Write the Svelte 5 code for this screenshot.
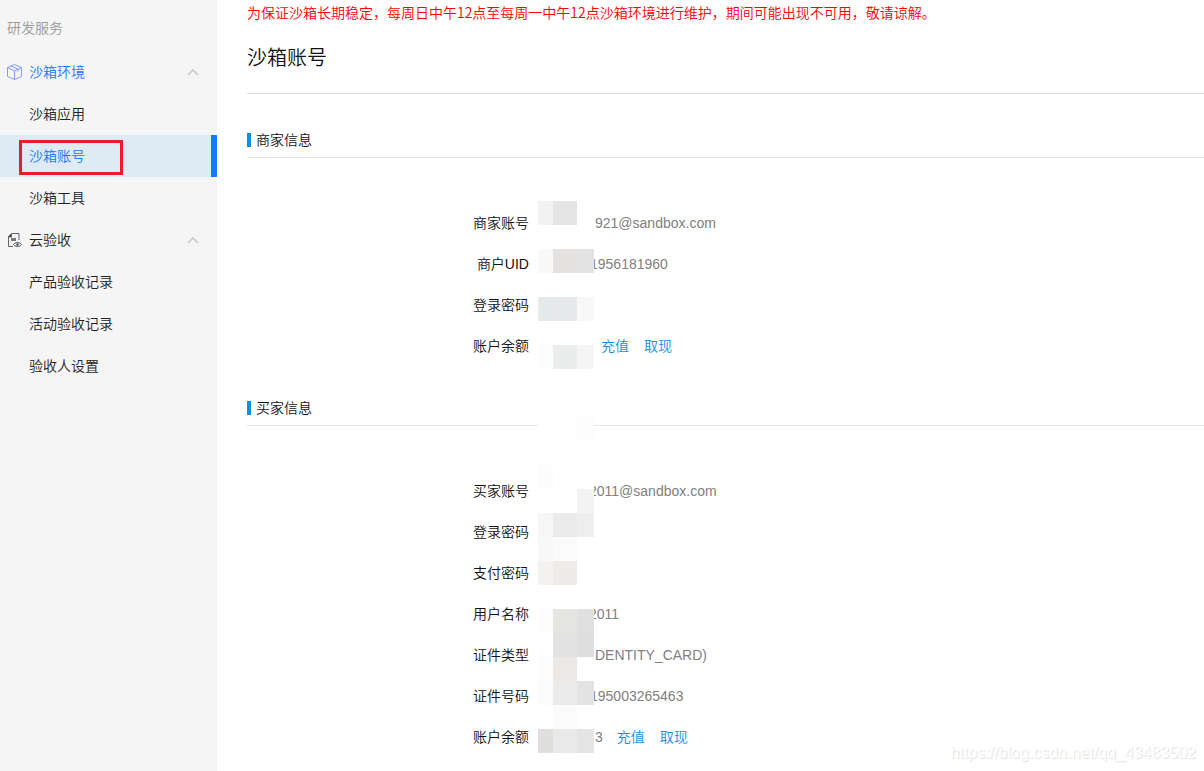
<script lang="ts">
  type MenuGroup = {
    title: string;
    icon: 'box' | 'doc';
    items: string[];
  };

  type Row = {
    label: string;
    value?: string;
    indent?: 'wide' | 'narrow';
    actions?: 'near' | 'far';
  };

  const groups: MenuGroup[] = [
    { title: '沙箱环境', icon: 'box', items: ['沙箱应用', '沙箱账号', '沙箱工具'] },
    { title: '云验收', icon: 'doc', items: ['产品验收记录', '活动验收记录', '验收人设置'] }
  ];

  const sections: { title: string; rows: Row[] }[] = [
    {
      title: '商家信息',
      rows: [
        { label: '商家账号', value: '921@sandbox.com', indent: 'wide' },
        { label: '商户UID', value: '1956181960' },
        { label: '登录密码' },
        { label: '账户余额', actions: 'near' }
      ]
    },
    {
      title: '买家信息',
      rows: [
        { label: '买家账号', value: '2011@sandbox.com', indent: 'narrow' },
        { label: '登录密码' },
        { label: '支付密码' },
        { label: '用户名称', value: '2011', indent: 'narrow' },
        { label: '证件类型', value: 'DENTITY_CARD)', indent: 'wide' },
        { label: '证件号码', value: '195003265463' },
        { label: '账户余额', value: '3', indent: 'wide', actions: 'far' }
      ]
    }
  ];

  // mask over the private part of the values, three cells per line
  const mask = [
    ['#f2f2f2', '#e4e4e4', '#fff'],
    ['#fff', '#fff', '#fff'],
    ['#f9f9f9', '#e4e2e1', '#e3e3e3'],
    ['#fff', '#fff', '#fff'],
    ['#e4e9ea', '#e7e8ea', '#f8f8f8'],
    ['#fff', '#fff', '#fff'],
    ['#fdfdfd', '#ebedec', '#f5f5f5'],
    ['#fff', '#fff', '#fff'],
    ['#fff', '#fff', '#fff'],
    ['#fff', '#fff', '#fdfdfd'],
    ['#fff', '#fff', '#fff'],
    ['#fcfcfc', '#fff', '#fff'],
    ['#fff', '#fff', '#f3f3f3'],
    ['#f6f6f6', '#ebebeb', '#eeeeee'],
    ['#f8f8f8', '#fbfbfb', '#fff'],
    ['#f3f2f0', '#edecea', '#fff'],
    ['#fff', '#fff', '#fff'],
    ['#fdfdfd', '#e5e5e3', '#e0e0e0'],
    ['#fff', '#e2e2e2', '#dedede'],
    ['#fdfdfd', '#ebe9e7', '#fff'],
    ['#fbfbfb', '#ebebeb', '#e3e3e3'],
    ['#fff', '#fbfbfb', '#fff'],
    ['#dfdfde', '#e9e9e9', '#e5e5e5']
  ].flat();

  let active = $state('沙箱账号');
  let closed: Record<string, boolean> = $state({});
</script>

<div class="page">
  <aside class="sidebar">
    <p class="sidebar-title">研发服务</p>
    <nav>
      {#each groups as group}
        <button
          class="group"
          class:current={group.items.includes(active)}
          aria-expanded={!closed[group.title]}
          onclick={() => (closed[group.title] = !closed[group.title])}
        >
          {#if group.icon === 'box'}
            <svg class="icon" viewBox="0 0 15 16" fill="none" stroke="#7d9dfa" stroke-linejoin="round">
              <path d="M7.5.6 14.5 3.5v9L7.5 15.5.5 12.5v-9z" />
              <path d="M.5 3.5l7 3.500 7-3.500M7.500 7v8.500M4 2l7 3.300v2.200" />
            </svg>
          {:else}
            <svg class="icon" viewBox="0 0 15 16" fill="none" stroke="#666">
              <path d="M6 14.500H1.500V4.500l3-3h7.500v6.500" />
              <path d="M1.500 5V4.500l3-3V5z" fill="#333" />
              <path d="M4 6h5v3H4z" fill="#777" stroke="none" />
              <path d="M6.500 12.500c2-2.700 6-2.700 8 0-2 2.700-6 2.700-8 0z" fill="#f5f5f5" stroke="#3d4757" />
              <circle cx="10.500" cy="12.500" r="1.200" fill="#3d4757" stroke="none" />
            </svg>
          {/if}
          <span>{group.title}</span>
          <svg class="arrow" viewBox="0 0 12 8" fill="none" stroke="#c4c6cf" stroke-width="1.500">
            <path d="M1 7l5-5 5 5" />
          </svg>
        </button>
        {#if !closed[group.title]}
          <ul>
            {#each group.items as item}
              <li>
                <a href="#{item}" class:active={item === active} onclick={() => (active = item)}>{item}</a>
              </li>
            {/each}
          </ul>
        {/if}
      {/each}
    </nav>
  </aside>

  <main>
    <p class="notice">为保证沙箱长期稳定，每周日中午12点至每周一中午12点沙箱环境进行维护，期间可能出现不可用，敬请谅解。</p>
    <h1>沙箱账号</h1>

    {#each sections as section}
      <section>
        <h2>{section.title}</h2>
        <dl>
          {#each section.rows as row}
            <div class="row">
              <dt>{row.label}</dt>
              <dd class={row.indent}>
                {#if row.value}<span>{row.value}</span>{/if}
                {#if row.actions}
                  <span class="actions {row.actions}">
                    <a href="#recharge">充值</a>
                    <a href="#withdraw">取现</a>
                  </span>
                {/if}
              </dd>
            </div>
          {/each}
        </dl>
      </section>
    {/each}

    <div class="mask" aria-hidden="true">
      {#each mask as color}
        <i style="background: {color}"></i>
      {/each}
    </div>
  </main>

  <span class="watermark">https://blog.csdn.net/qq_43483502</span>
</div>

<style>
  :global(body) {
    margin: 0;
    background: #fff;
    font-family: 'Liberation Sans', 'Noto Sans CJK SC', sans-serif;
    font-size: 14px;
    font-weight: 350;
    color: #111;
  }
  .page {
    position: relative;
    display: flex;
    min-height: 100vh;
  }
  .sidebar {
    flex: none;
    width: 217px;
    background: #f5f5f5;
  }
  .sidebar-title {
    margin: 0;
    padding: 7px 7px 2px;
    line-height: 42px;
    color: #999;
  }
  .group {
    display: flex;
    align-items: center;
    gap: 7px;
    width: 100%;
    height: 42px;
    padding: 0 18px 0 7px;
    border: 0;
    background: none;
    font: inherit;
    line-height: 42px;
    color: #222;
    cursor: pointer;
  }
  .group.current {
    color: #1677ff;
  }
  .icon {
    width: 15px;
    height: 16px;
  }
  .arrow {
    width: 12px;
    height: 8px;
    margin-left: auto;
  }
  .group[aria-expanded='false'] .arrow {
    transform: rotate(180deg);
  }
  ul {
    margin: 0;
    padding: 0;
    list-style: none;
  }
  li a {
    position: relative;
    display: block;
    height: 42px;
    padding-left: 29px;
    line-height: 42px;
    color: #222;
    text-decoration: none;
  }
  li a.active {
    background: #deebf5;
    border-right: 6px solid #1677ff;
    color: #1677ff;
  }
  li a.active::after {
    content: '';
    position: absolute;
    top: 5px;
    left: 19px;
    width: 98px;
    height: 29px;
    border: 3px solid #ed1c24;
  }
  main {
    position: relative;
    flex: 1;
    min-width: 0;
    padding-left: 30px;
  }
  .notice {
    margin: 0;
    padding-bottom: 2px;
    line-height: 24px;
    font-family: 'Noto Sans CJK SC', sans-serif;
    color: #f00;
  }
  h1 {
    margin: 0 0 28px;
    padding-bottom: 3px;
    border-bottom: 1px solid #ddd;
    font-size: 20px;
    font-weight: 350;
    line-height: 64px;
  }
  h2 {
    display: flex;
    align-items: center;
    gap: 5px;
    height: 35px;
    margin: 0;
    border-bottom: 1px solid #e5e5e5;
    font-size: 14px;
    font-weight: 350;
    line-height: 36px;
  }
  h2::before {
    content: '';
    width: 4px;
    height: 14px;
    background: #108ee9;
  }
  dl {
    margin: 0;
    padding: 45px 0 23px;
  }
  section:last-of-type dl {
    padding-bottom: 0;
  }
  .row {
    display: grid;
    grid-template-columns: 282px 1fr;
    line-height: 41px;
  }
  dt {
    text-align: right;
  }
  dd {
    margin: 0;
    padding-left: 61px;
    color: #808080;
  }
  dd.narrow {
    padding-left: 60px;
  }
  dd.wide {
    padding-left: 66px;
  }
  .actions {
    display: inline-flex;
    gap: 15px;
  }
  .actions.near {
    margin-left: 11px;
  }
  .actions.far {
    margin-left: 10px;
  }
  .actions a {
    color: #108ee9;
    text-decoration: none;
  }
  .mask {
    position: absolute;
    top: 201px;
    left: 321px;
    display: grid;
    grid-template-columns: 15px 24px 17px;
    grid-auto-rows: 24px;
  }
  .watermark {
    position: absolute;
    right: 8px;
    bottom: 8px;
    font-size: 16px;
    line-height: 20px;
    color: #fff;
    text-shadow: 1px 1px 1px #ddd;
  }
</style>
